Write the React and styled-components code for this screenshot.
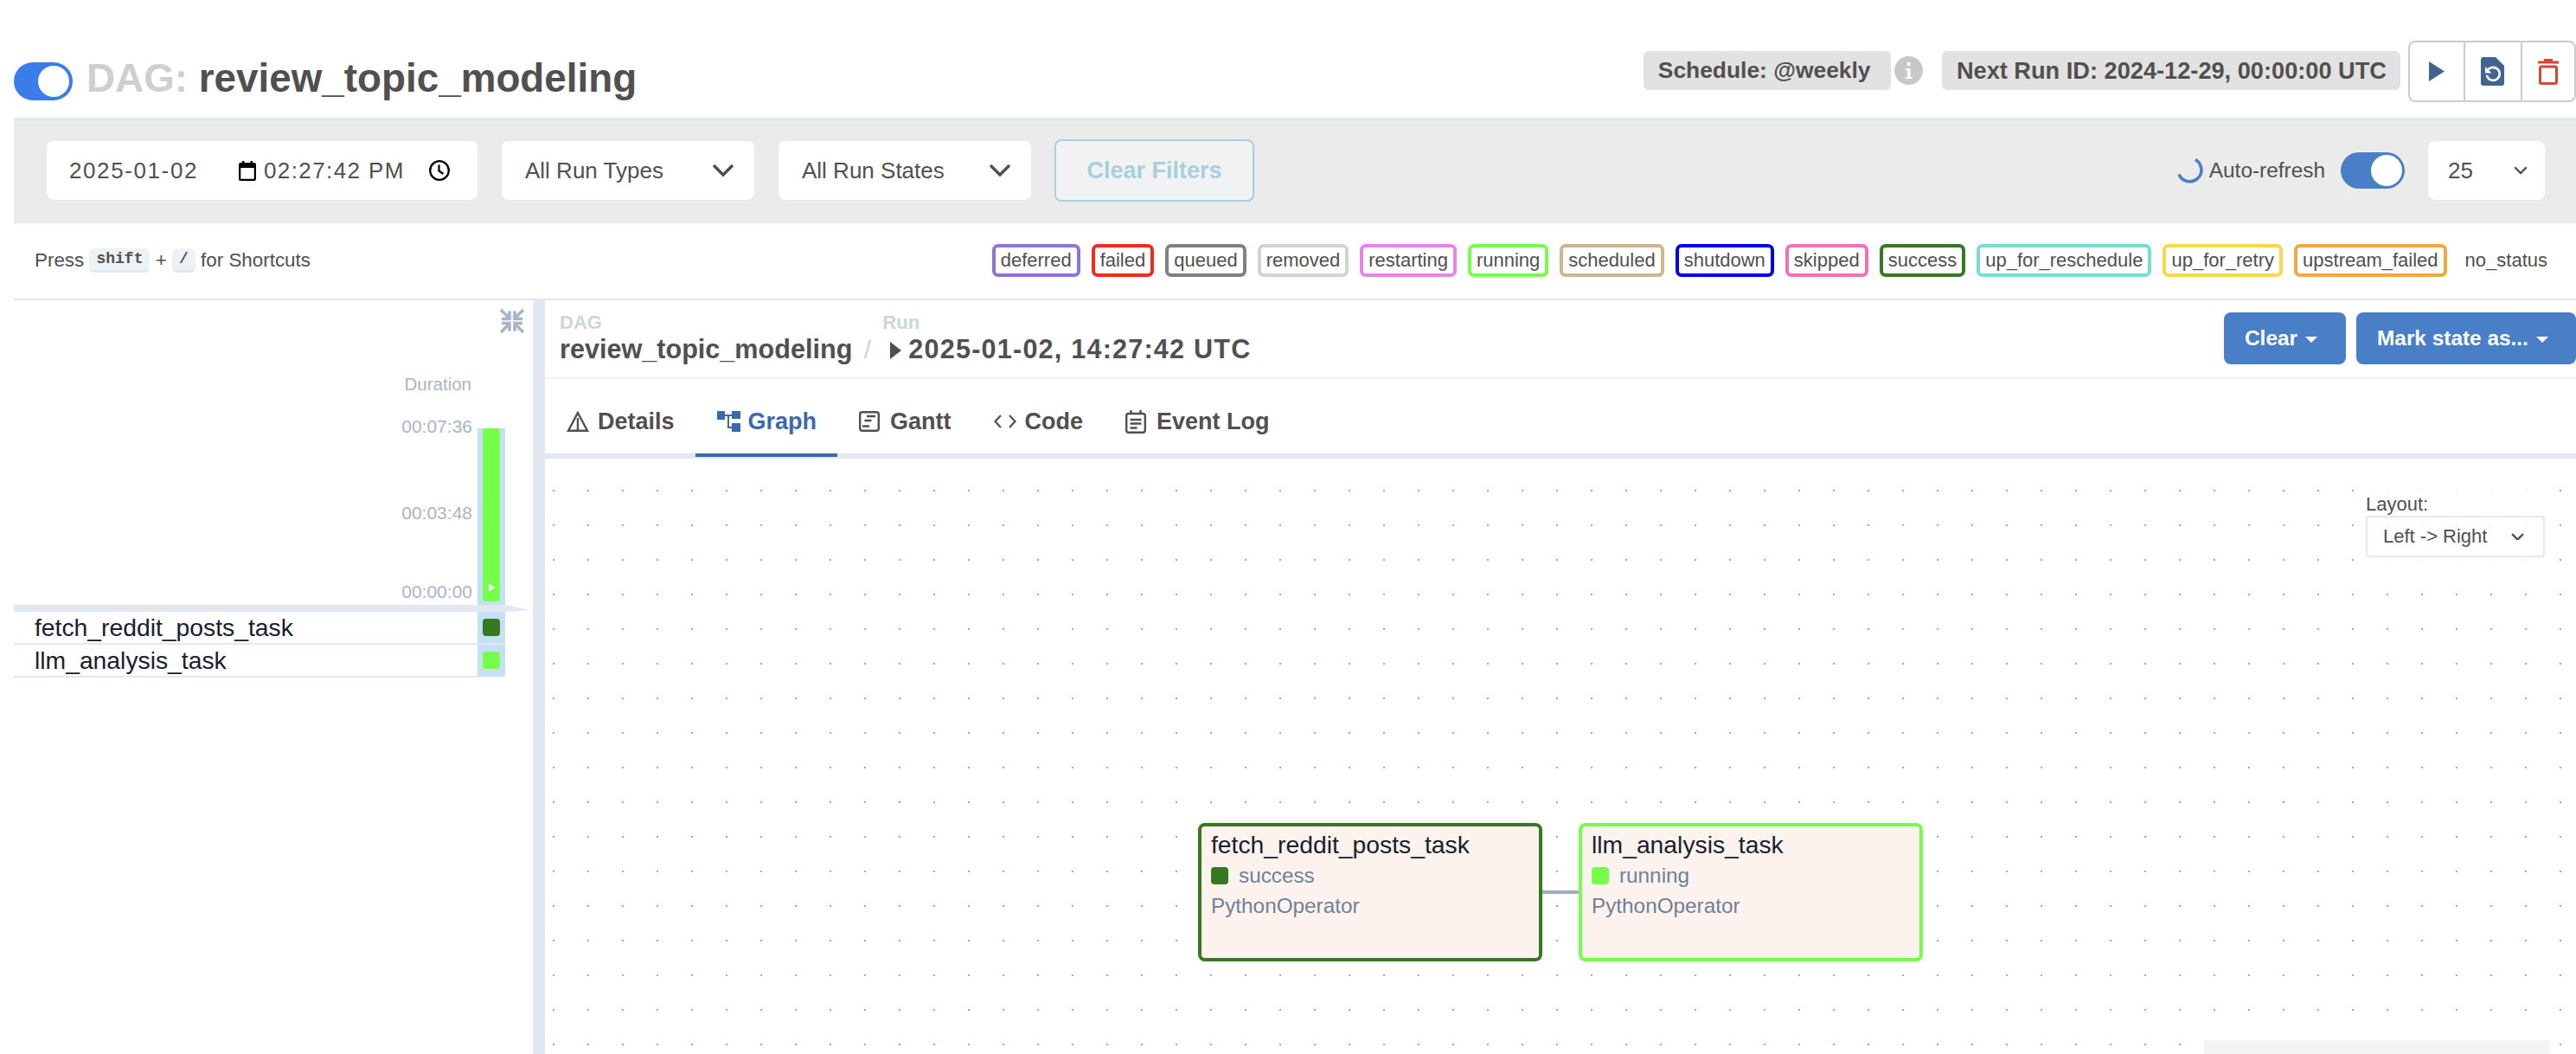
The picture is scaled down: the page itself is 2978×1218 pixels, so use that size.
import React from "react";
import styled, { createGlobalStyle } from "styled-components";

const TEXT = "#51504f";
const BLUE = "#487fc6";
const ACTIVE = "#3b69ad";
const LINE = "#e2e8f0";
const SUCCESS = "#357a20";
const RUNNING = "#76ff4a";

const LEGEND = [
  ["deferred", "#8f74d8"],
  ["failed", "#ee2b1d"],
  ["queued", "#808080"],
  ["removed", "#d3d3d3"],
  ["restarting", "#e583e8"],
  ["running", RUNNING],
  ["scheduled", "#d2b48c"],
  ["shutdown", "#0000f5"],
  ["skipped", "#f071b4"],
  ["success", SUCCESS],
  ["up_for_reschedule", "#75dfd2"],
  ["up_for_retry", "#fbd848"],
  ["upstream_failed", "#f3a73c"],
];

const TASKS = [
  { name: "fetch_reddit_posts_task", state: "success", color: SUCCESS },
  { name: "llm_analysis_task", state: "running", color: RUNNING },
];

const GlobalStyle = createGlobalStyle`
  html, body {
    margin: 0;
    background: #fff;
  }
  body {
    font-family: "Liberation Sans", Arial, sans-serif;
    color: ${TEXT};
  }
  * {
    box-sizing: border-box;
  }
`;

function Chevron({ size = 26, stroke = 3.4 }) {
  return (
    <svg width={size} height={size * 0.58} viewBox="0 0 26 15" fill="none">
      <path d="M2 2l11 11L24 2" stroke={TEXT} strokeWidth={stroke * (26 / size)} />
    </svg>
  );
}

function InfoIcon() {
  return (
    <svg width="33" height="33" viewBox="0 0 33 33">
      <circle cx="16.5" cy="16.5" r="16.5" fill="#c8c8c8" />
      <rect x="14.5" y="7" width="4" height="4" fill="#fff" />
      <path d="M13 14h5.5v10H21v2h-8v-2h2v-8h-2z" fill="#fff" />
    </svg>
  );
}

function PlayIcon() {
  return (
    <svg width="18" height="23" viewBox="0 0 18 23">
      <polygon points="0,0 18,11.5 0,23" fill="#40668f" />
    </svg>
  );
}

function ReparseIcon() {
  return (
    <svg width="27" height="33" viewBox="0 0 27 33">
      <path d="M3 0h14l10 10v20a3 3 0 0 1-3 3H3a3 3 0 0 1-3-3V3a3 3 0 0 1 3-3z" fill="#40668f" />
      <path d="M8.5 14.5a7.5 7.5 0 1 1-1.6 6.5" fill="none" stroke="#fff" strokeWidth="2.6" />
      <polygon points="5,11 5,18.5 12.5,18.5" fill="#fff" />
    </svg>
  );
}

function TrashIcon() {
  return (
    <svg width="24" height="30" viewBox="0 0 24 30">
      <path d="M7 0h10v2.500h7V5.500H0V2.500h7z" fill="#d24a33" />
      <rect x="2.500" y="9" width="19" height="19.500" rx="1.500" fill="none" stroke="#d24a33" strokeWidth="3" />
    </svg>
  );
}

function CalendarIcon() {
  return (
    <svg width="20" height="23" viewBox="0 0 20 23">
      <path d="M4 0h2.500v2h7V0H16v2h2a2 2 0 0 1 2 2v17a2 2 0 0 1-2 2H2a2 2 0 0 1-2-2V4a2 2 0 0 1 2-2h2zM2.300 8v12.700h15.400V8z" fill="#000" />
    </svg>
  );
}

function ClockIcon() {
  return (
    <svg width="24" height="24" viewBox="0 0 24 24" fill="none" stroke="#000" strokeWidth="2.300">
      <circle cx="12" cy="12" r="10.800" />
      <path d="M11.500 5.500V12.500L16.500 16" />
    </svg>
  );
}

function Spinner() {
  return (
    <svg width="32" height="32" viewBox="0 0 32 32" fill="none">
      <path d="M22 3.500A13.500 13.500 0 1 1 3 20.500" stroke={BLUE} strokeWidth="3.500" />
    </svg>
  );
}

function CollapseIcon() {
  return (
    <svg width="30" height="30" viewBox="0 0 30 30" fill="none" stroke="#a9b5c7" strokeWidth="3.600">
      <path d="M2 2l9 9M12 3.500V12.500H3" />
      <path d="M28 2l-9 9M18 3.500V12.500H27" />
      <path d="M2 28l9-9M12 26.500V17.500H3" />
      <path d="M28 28l-9-9M18 26.500V17.500H27" />
    </svg>
  );
}

function DetailsIcon() {
  return (
    <svg width="26" height="24" viewBox="0 0 26 24" fill="none" stroke={TEXT} strokeWidth="2.400">
      <path d="M13 2L24 22.800H2z" />
      <path d="M13 8v15" />
    </svg>
  );
}

function GraphIcon() {
  return (
    <svg width="27" height="24" viewBox="0 0 27 24" fill={ACTIVE}>
      <rect x="0" y="0" width="9" height="10" />
      <rect x="17" y="0" width="10" height="9" />
      <rect x="17" y="14" width="10" height="10" />
      <path d="M9 4h8v2h-3v12h3v2h-5V6H9z" />
    </svg>
  );
}

function GanttIcon() {
  return (
    <svg width="24" height="24" viewBox="0 0 24 24" fill="none" stroke={TEXT} strokeWidth="2.400">
      <rect x="1.200" y="1.200" width="21.600" height="21.600" rx="2.500" />
      <path d="M9 6h10M6.500 11h8M4 17.500h8" />
    </svg>
  );
}

function CodeIcon() {
  return (
    <svg width="26" height="16" viewBox="0 0 26 16" fill="none" stroke={TEXT} strokeWidth="2.200">
      <path d="M8 1L1.500 8 8 15M18 1l6.500 7L18 15" />
    </svg>
  );
}

function LogIcon() {
  return (
    <svg width="24" height="27" viewBox="0 0 24 27" fill="none" stroke={TEXT} strokeWidth="2.400">
      <rect x="1.200" y="4" width="21.600" height="21.800" rx="2.500" />
      <path d="M6.500 0v5M17.500 0v5M5.500 11h13M5.500 15.500h13M5.500 20.500h8" />
    </svg>
  );
}

const TABS = [
  { label: "Details", icon: <DetailsIcon /> },
  { label: "Graph", icon: <GraphIcon />, active: true },
  { label: "Gantt", icon: <GanttIcon /> },
  { label: "Code", icon: <CodeIcon /> },
  { label: "Event Log", icon: <LogIcon /> },
];

export default function App() {
  return (
    <Page>
      <GlobalStyle />

      <TopBar>
        <TitleGroup>
          <DagToggle />
          <Title>
            <TitleMuted>DAG:</TitleMuted> review_topic_modeling
          </Title>
        </TitleGroup>
        <TopActions>
          <InfoBadge $size={26.4}>Schedule: @weekly&nbsp;</InfoBadge>
          <InfoSlot>
            <InfoIcon />
          </InfoSlot>
          <InfoBadge $size={27.2}>Next Run ID: 2024-12-29, 00:00:00 UTC</InfoBadge>
          <ActionGroup>
            <ActionButton $width={61.5}>
              <PlayIcon />
            </ActionButton>
            <ActionButton $width={66}>
              <ReparseIcon />
            </ActionButton>
            <ActionButton $width={62.5}>
              <TrashIcon />
            </ActionButton>
          </ActionGroup>
        </TopActions>
      </TopBar>

      <FilterBar>
        <FilterGroup>
          <DateField>
            <DateText>2025-01-02</DateText>
            <CalendarIcon />
            <TimeText>02:27:42 PM</TimeText>
            <ClockIcon />
          </DateField>
          <SelectField>
            All Run Types
            <Chevron />
          </SelectField>
          <SelectField>
            All Run States
            <Chevron />
          </SelectField>
          <ClearFilters>Clear Filters</ClearFilters>
        </FilterGroup>
        <RefreshGroup>
          <SpinnerSlot>
            <Spinner />
          </SpinnerSlot>
          <RefreshLabel>Auto-refresh</RefreshLabel>
          <RefreshToggle />
          <CountSelect>
            25
            <Chevron size={16} stroke={2.4} />
          </CountSelect>
        </RefreshGroup>
      </FilterBar>

      <LegendRow>
        <Shortcuts>
          {"Press "}
          <Kbd>shift</Kbd>
          {" + "}
          <Kbd>/</Kbd>
          {" for Shortcuts"}
        </Shortcuts>
        <Legend>
          {LEGEND.map(([name, color]) => (
            <LegendItem key={name} $color={color}>
              {name}
            </LegendItem>
          ))}
          <NoStatus>no_status</NoStatus>
        </Legend>
      </LegendRow>

      <Main>
        <LeftPane>
          <CollapseRow>
            <CollapseIcon />
          </CollapseRow>
          <DurationTitle>Duration</DurationTitle>
          <ChartRow>
            <Axis>
              <AxisLabel>00:07:36</AxisLabel>
              <AxisLabel>00:03:48</AxisLabel>
              <AxisLabel>00:00:00</AxisLabel>
            </Axis>
            <BarTrack>
              <RunBar>
                <svg width="7" height="10" viewBox="0 0 7 10">
                  <polygon points="0,0 7,5 0,10" fill="#fff" />
                </svg>
              </RunBar>
            </BarTrack>
          </ChartRow>
          <ChartRule />
          {TASKS.map((task) => (
            <TaskRow key={task.name}>
              <TaskName>{task.name}</TaskName>
              <TaskCell>
                <StateSquare $color={task.color} />
              </TaskCell>
            </TaskRow>
          ))}
        </LeftPane>

        <Divider />

        <RightPane>
          <DetailHeader>
            <Breadcrumbs>
              <Crumb>
                <CrumbLabel>DAG</CrumbLabel>
                <CrumbValue>review_topic_modeling</CrumbValue>
              </Crumb>
              <CrumbSlash>/</CrumbSlash>
              <Crumb>
                <CrumbLabel>Run</CrumbLabel>
                <CrumbValue $spaced>
                  <RunMark />
                  2025-01-02, 14:27:42 UTC
                </CrumbValue>
              </Crumb>
            </Breadcrumbs>
            <HeaderButtons>
              <BlueButton $width={141}>
                Clear
                <Caret />
              </BlueButton>
              <BlueButton $width={254}>
                Mark state as...
                <Caret />
              </BlueButton>
            </HeaderButtons>
          </DetailHeader>

          <Tabs>
            {TABS.map((tab) => (
              <Tab key={tab.label} $active={tab.active}>
                <TabIcon>{tab.icon}</TabIcon>
                {tab.label}
              </Tab>
            ))}
          </Tabs>

          <Canvas>
            <LayoutPanel>
              <LayoutLabel>Layout:</LayoutLabel>
              <LayoutSelect>
                Left -&gt; Right
                <Chevron size={15} stroke={2.4} />
              </LayoutSelect>
            </LayoutPanel>

            <Edge />
            {TASKS.map((task, idx) => (
              <Node key={task.name} $left={755 + idx * 440} $color={task.color}>
                <NodeTitle>{task.name}</NodeTitle>
                <NodeState>
                  <StateSquare $color={task.color} />
                  {task.state}
                </NodeState>
                <NodeOperator>PythonOperator</NodeOperator>
              </Node>
            ))}
            <MiniMap />
          </Canvas>
        </RightPane>
      </Main>
    </Page>
  );
}

const Page = styled.div`
  display: flex;
  flex-direction: column;
  width: 2978px;
  height: 1218px;
  padding-left: 16px;
  overflow: hidden;
`;

const TopBar = styled.div`
  display: flex;
  justify-content: space-between;
  height: 136px;
`;

const TitleGroup = styled.div`
  display: flex;
  align-items: center;
  gap: 16px;
  height: 44px;
  margin-top: 72px;
`;

const DagToggle = styled.div`
  position: relative;
  width: 68px;
  height: 44px;
  border-radius: 22px;
  background: #3b7de8;

  &::after {
    content: "";
    position: absolute;
    top: 4px;
    right: 4px;
    width: 36px;
    height: 36px;
    border-radius: 50%;
    background: #fff;
  }
`;

const Title = styled.h1`
  margin: -6px 0 0;
  font-size: 45.8px;
  line-height: 44px;
  font-weight: 700;
  white-space: pre;
  color: ${TEXT};
`;

const TitleMuted = styled.span`
  color: #cfcfcf;
`;

const TopActions = styled.div`
  display: flex;
  align-items: center;
  height: 71px;
  margin-top: 47px;
`;

const InfoBadge = styled.div`
  height: 45px;
  margin-top: -2px;
  padding: 0 16px 0 17px;
  border-radius: 6px;
  background: #e2e2e2;
  font-size: ${(props) => props.$size}px;
  line-height: 45px;
  font-weight: 700;
  white-space: nowrap;
`;

const InfoSlot = styled.div`
  display: flex;
  height: 33px;
  margin: -3px 22px 0 4px;
`;

const ActionGroup = styled.div`
  display: flex;
  flex: none;
  height: 71px;
  margin-left: 9px;
  border: 2.5px solid #ccc;
  border-radius: 8px;
`;

const ActionButton = styled.div`
  display: flex;
  align-items: center;
  justify-content: center;
  width: ${(props) => props.$width}px;

  & + & {
    border-left: 2.5px solid #ccc;
  }
`;

const FilterBar = styled.div`
  display: flex;
  align-items: center;
  justify-content: space-between;
  height: 122px;
  padding: 0 36px 4px 38px;
  border-top: 4px solid ${LINE};
  background: #ebebec;
  font-size: 26px;
`;

const FilterGroup = styled.div`
  display: flex;
  align-items: center;
  gap: 28px;
`;

const Field = styled.div`
  display: flex;
  align-items: center;
  height: 68px;
  border-radius: 8px;
  background: #fff;
  box-shadow: 0 1px 0 ${LINE};
`;

const DateField = styled(Field)`
  width: 498px;
  padding: 0 32px 0 26px;
`;

const DateText = styled.span`
  width: 196px;
  letter-spacing: 1.6px;
`;

const TimeText = styled.span`
  flex: 1;
  margin-left: 9px;
  letter-spacing: 1.4px;
  white-space: pre;
`;

const SelectField = styled(Field)`
  justify-content: space-between;
  width: 292px;
  padding: 0 23px 0 27px;
`;

const ClearFilters = styled.div`
  display: flex;
  align-items: center;
  justify-content: center;
  width: 231px;
  height: 72px;
  margin-left: -1px;
  border: 2.5px solid #a8cfdc;
  border-radius: 8px;
  background: #f1f2f3;
  color: #a8cfdc;
  font-size: 27px;
  font-weight: 700;
`;

const RefreshGroup = styled.div`
  display: flex;
  align-items: center;
`;

const SpinnerSlot = styled.div`
  display: flex;
  height: 32px;
  margin-right: 6px;
`;

const RefreshLabel = styled.span`
  font-size: 24.4px;
`;

const RefreshToggle = styled.div`
  position: relative;
  width: 74px;
  height: 42px;
  margin: 0 27px 0 18px;
  border-radius: 21px;
  background: ${BLUE};

  &::after {
    content: "";
    position: absolute;
    top: 3px;
    right: 3px;
    width: 36px;
    height: 36px;
    border-radius: 50%;
    background: #fff;
  }
`;

const CountSelect = styled(Field)`
  justify-content: space-between;
  width: 135px;
  padding: 0 20px 0 23px;
`;

const LegendRow = styled.div`
  display: flex;
  align-items: flex-start;
  justify-content: space-between;
  height: 89px;
  padding: 24px 33px 0 24px;
  border-bottom: 2px solid ${LINE};
`;

const Shortcuts = styled.div`
  display: flex;
  align-items: center;
  height: 38px;
  font-size: 22.4px;
  white-space: pre;
`;

const Kbd = styled.kbd`
  height: 28px;
  padding: 0 8px;
  border-radius: 6px;
  background: #edf2f7;
  border-bottom: 3px solid ${LINE};
  font-family: "Liberation Mono", monospace;
  font-size: 18px;
  line-height: 24px;
  font-weight: 700;
`;

const Legend = styled.div`
  display: flex;
  align-items: center;
  gap: 13px;
`;

const LegendItem = styled.div`
  height: 38px;
  padding: 0 6px;
  border: 4px solid ${(props) => props.$color};
  border-radius: 7px;
  font-size: 22px;
  line-height: 30px;
`;

const NoStatus = styled.div`
  margin-left: 8px;
  font-size: 22px;
`;

const Main = styled.div`
  display: flex;
  flex: 1;
  min-height: 0;
`;

const LeftPane = styled.div`
  width: 600px;
  padding-right: 32px;
`;

const CollapseRow = styled.div`
  display: flex;
  justify-content: flex-end;
  height: 85px;
  padding-top: 9px;
  margin-right: -23px;
`;

const DurationTitle = styled.div`
  height: 49px;
  padding-right: 39px;
  color: #a9b5c7;
  font-size: 20.5px;
  line-height: 24px;
  text-align: right;
`;

const ChartRow = styled.div`
  display: flex;
  justify-content: flex-end;
  height: 218px;
`;

const Axis = styled.div`
  display: grid;
  grid-template-rows: 100px 91px 24px;
  margin-right: 6px;
`;

const AxisLabel = styled.div`
  color: #a9b5c7;
  font-size: 21px;
  line-height: 24px;
  text-align: right;
`;

const BarTrack = styled.div`
  width: 32px;
  height: 204px;
  margin-top: 14px;
  padding: 0 6px;
  background: #c4e0f5;
`;

const RunBar = styled.div`
  display: flex;
  align-items: flex-end;
  justify-content: center;
  height: 200px;
  padding-bottom: 11px;
  border-radius: 4px;
  background: ${RUNNING};
`;

const ChartRule = styled.div`
  position: relative;
  height: 8px;
  background: ${LINE};

  &::after {
    content: "";
    position: absolute;
    top: 0;
    left: 100%;
    width: 30px;
    height: 8px;
    background: ${LINE};
    clip-path: polygon(0 0, 100% 75%, 0 100%);
  }
`;

const TaskRow = styled.div`
  display: flex;
  align-items: stretch;
  justify-content: space-between;
  height: 38px;
  border-bottom: 2px solid ${LINE};
`;

const TaskName = styled.div`
  padding-left: 24px;
  color: #1a202c;
  font-size: 28.3px;
  line-height: 36px;
`;

const TaskCell = styled.div`
  display: flex;
  align-items: center;
  justify-content: center;
  width: 32px;
  background: #c4e0f5;
`;

const StateSquare = styled.span`
  width: 20px;
  height: 20px;
  border-radius: 4px;
  background: ${(props) => props.$color};
`;

const Divider = styled.div`
  flex: none;
  width: 14px;
  background: ${LINE};
`;

const RightPane = styled.div`
  display: flex;
  flex: 1;
  flex-direction: column;
  min-width: 0;
`;

const DetailHeader = styled.div`
  display: flex;
  justify-content: space-between;
  height: 91px;
  padding: 14px 0 0 17px;
  border-bottom: 2px solid #edf2f7;
`;

const Breadcrumbs = styled.div`
  display: flex;
  align-items: flex-end;
  height: 60px;
`;

const Crumb = styled.div`
  display: flex;
  flex-direction: column;
`;

const CrumbLabel = styled.div`
  color: #cbd5e0;
  font-size: 22px;
  line-height: 26px;
  font-weight: 700;
`;

const CrumbValue = styled.div`
  display: flex;
  align-items: center;
  font-size: 30.6px;
  line-height: 35px;
  font-weight: 700;
  letter-spacing: ${(props) => (props.$spaced ? "1.2px" : "0")};
`;

const CrumbSlash = styled.div`
  width: 35px;
  color: #cbd5e0;
  font-size: 30px;
  line-height: 35px;
  text-align: center;
`;

const RunMark = styled.span`
  width: 0;
  height: 0;
  margin: 2px 8px 0 9px;
  border-top: 10px solid transparent;
  border-bottom: 10px solid transparent;
  border-left: 13px solid ${TEXT};
`;

const HeaderButtons = styled.div`
  display: flex;
  gap: 12px;
`;

const BlueButton = styled.div`
  display: flex;
  align-items: center;
  gap: 9px;
  width: ${(props) => props.$width}px;
  height: 60px;
  padding-left: 24px;
  border-radius: 8px;
  background: ${BLUE};
  color: #fff;
  font-size: 24.4px;
  font-weight: 700;
  white-space: nowrap;
`;

const Caret = styled.span`
  width: 0;
  height: 0;
  margin-top: 2px;
  border-top: 7px solid #fff;
  border-left: 7px solid transparent;
  border-right: 7px solid transparent;
`;

const Tabs = styled.div`
  display: flex;
  height: 92px;
  border-bottom: 6px solid ${LINE};
`;

const Tab = styled.div`
  display: flex;
  align-items: center;
  height: 90px;
  padding: 12px 24px 0 25px;
  border-bottom: 4px solid ${(props) => (props.$active ? ACTIVE : "transparent")};
  color: ${(props) => (props.$active ? ACTIVE : TEXT)};
  font-size: 27px;
  font-weight: 700;
  white-space: nowrap;
`;

const TabIcon = styled.span`
  display: flex;
  align-items: center;
  width: 36px;
`;

const Canvas = styled.div`
  position: relative;
  flex: 1;
  background-image: radial-gradient(circle at 1px 1px, #a6a6a6 1px, transparent 1.2px);
  background-position: 9px 36px;
  background-size: 40px 40px;
`;

const LayoutPanel = styled.div`
  position: absolute;
  top: 30px;
  right: 36px;
  width: 207px;
  padding: 9px 0 6px;
  background: rgba(255, 255, 255, 0.8);
`;

const LayoutLabel = styled.div`
  font-size: 22px;
  line-height: 27px;
`;

const LayoutSelect = styled.div`
  display: flex;
  align-items: center;
  justify-content: space-between;
  height: 48px;
  padding: 0 22px 0 18px;
  border: 2px solid ${LINE};
  border-radius: 4px;
  font-size: 22px;
`;

const Edge = styled.div`
  position: absolute;
  top: 499px;
  left: 1153px;
  width: 42px;
  height: 4px;
  background: #a0aec0;
`;

const Node = styled.div`
  position: absolute;
  top: 421px;
  left: ${(props) => props.$left}px;
  width: 398px;
  height: 160px;
  padding: 4px 11px;
  border: 4px solid ${(props) => props.$color};
  border-radius: 8px;
  background: #fdf3ee;
`;

const NodeTitle = styled.div`
  color: #1a202c;
  font-size: 28.3px;
  line-height: 34px;
`;

const NodeState = styled.div`
  display: flex;
  align-items: center;
  gap: 12px;
  height: 20px;
  margin-top: 9px;
  color: #718096;
  font-size: 24.3px;
`;

const NodeOperator = styled.div`
  margin-top: 11px;
  color: #718096;
  font-size: 24.3px;
  line-height: 28px;
`;

const MiniMap = styled.div`
  position: absolute;
  right: 30px;
  bottom: 0;
  width: 400px;
  height: 16px;
  background: #f3f3f3;
`;
